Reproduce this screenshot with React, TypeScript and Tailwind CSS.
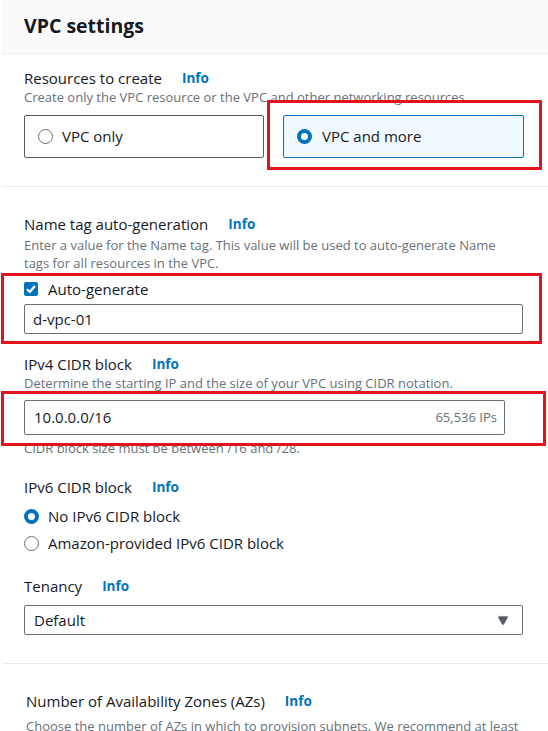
import { Triangle } from "lucide-react"

function Info() {
  return <span className="ml-[20px] text-[13.5px] font-bold text-[#0073bb]">Info</span>
}

function Radio({ checked }: { checked?: boolean }) {
  if (checked) {
    return <span className="box-border block h-[15px] w-[15px] shrink-0 rounded-full border-[4.5px] border-[#0073bb] bg-white" />
  }
  return <span className="box-border block h-[15px] w-[15px] shrink-0 rounded-full border-[1.5px] border-[#687078] bg-white" />
}

function Checkbox() {
  return (
    <span className="flex h-[14px] w-[14px] shrink-0 items-center justify-center rounded-[2px] bg-[#0073bb]">
      <svg viewBox="0 0 14 14" className="h-[14px] w-[14px]">
        <path d="M3 7.2 L5.8 10 L11 4" fill="none" stroke="white" strokeWidth="2.2" />
      </svg>
    </span>
  )
}

function RedBox({ className }: { className: string }) {
  return <div className={"pointer-events-none absolute border-[3px] border-[#e3131b] " + className} />
}

export default function App() {
  return (
    <div className="relative min-h-[731px] w-[548px] overflow-hidden bg-white pl-[2px] font-['Open_Sans',sans-serif] text-[#16191f]">
      <div className="flex h-[54px] items-center border-b border-[#e9ebed] bg-[#fafafa] pl-[22px] pb-[2px] text-[19.5px] font-bold">
        VPC settings
      </div>

      {/* resources to create */}
      <div className="border-b border-[#e9ebed] px-[22px] pt-[14px] pb-[28px]">
        <div className="flex h-[20px] items-center text-[15px]">
          Resources to create
          <Info />
        </div>
        <div className="h-[18px] text-[13px] leading-[18px] text-[#687078]">
          Create only the VPC resource or the VPC and other networking resources.
        </div>
        <div className="mt-[9px] flex gap-[19px]">
          <div className="flex h-[43px] w-[240px] items-center gap-[9px] rounded-[2px] border border-[#545b64] bg-white pl-[13px] text-[15px]">
            <Radio />
            VPC only
          </div>
          <div className="flex h-[43px] w-[241px] items-center gap-[10px] rounded-[2px] border border-[#0073bb] bg-[#f1faff] pl-[13px] text-[15px]">
            <Radio checked />
            VPC and more
          </div>
        </div>
      </div>

      {/* name tag, cidr, tenancy */}
      <div className="border-b border-[#e9ebed] px-[22px] pt-[27px] pb-[28px]">
        <div className="flex h-[20px] items-center text-[15px]">
          Name tag auto-generation
          <Info />
        </div>
        <div className="mt-[2px] w-[490px] text-[13px] leading-[18px] text-[#687078]">
          Enter a value for the Name tag. This value will be used to auto-generate Name tags for all resources in the VPC.
        </div>
        <div className="mt-[7px] flex h-[20px] items-center gap-[10px] text-[15px]">
          <Checkbox />
          Auto-generate
        </div>
        <div className="mt-[5px] flex h-[30px] w-[499px] items-center rounded-[2px] border border-[#687078] pl-[8px] text-[15px]">
          d-vpc-01
        </div>

        <div className="mt-[20px] flex h-[20px] items-center text-[15px]">
          IPv4 CIDR block
          <Info />
        </div>
        <div className="h-[19px] text-[13px] leading-[18px] text-[#687078]">
          Determine the starting IP and the size of your VPC using CIDR notation.
        </div>
        <div className="mt-[7px] flex h-[35px] w-[481px] items-center justify-between rounded-[2px] border border-[#687078] pl-[9px] pr-[7px] text-[15px]">
          <span>10.0.0.0/16</span>
          <span className="text-[13px] text-[#687078]">65,536 IPs</span>
        </div>
        <div className="mt-[4px] h-[18px] text-[13px] leading-[18px] text-[#687078]">
          CIDR block size must be between /16 and /28.
        </div>

        <div className="mt-[20px] flex h-[20px] items-center text-[15px]">
          IPv6 CIDR block
          <Info />
        </div>
        <div className="mt-[9px] flex h-[20px] items-center gap-[9px] text-[15px]">
          <Radio checked />
          No IPv6 CIDR block
        </div>
        <div className="mt-[7px] flex h-[20px] items-center gap-[9px] text-[15px]">
          <Radio />
          Amazon-provided IPv6 CIDR block
        </div>

        <div className="mt-[23px] flex h-[20px] items-center text-[15px]">
          Tenancy
          <Info />
        </div>
        <div className="mt-[9px] flex h-[30px] w-[499px] items-center justify-between rounded-[2px] border border-[#687078] pl-[9px] pr-[13px] text-[15px]">
          <span>Default</span>
          <Triangle className="h-[11px] w-[12px] rotate-180 fill-[#545b64] text-[#545b64]" strokeWidth={1} />
        </div>
      </div>

      {/* availability zones */}
      <div className="px-[24px] pt-[27px]">
        <div className="flex h-[20px] items-center text-[15px]">
          Number of Availability Zones (AZs)
          <Info />
        </div>
        <div className="mt-[6px] w-[496px] text-[13px] leading-[18px] text-[#687078]">
          Choose the number of AZs in which to provision subnets. We recommend at least two AZs for high availability.
        </div>
      </div>

      <RedBox className="left-[267px] top-[100px] h-[70px] w-[275px]" />
      <RedBox className="left-[1px] top-[273px] h-[71px] w-[541px]" />
      <RedBox className="left-[1px] top-[391px] h-[55px] w-[545px]" />
    </div>
  )
}
